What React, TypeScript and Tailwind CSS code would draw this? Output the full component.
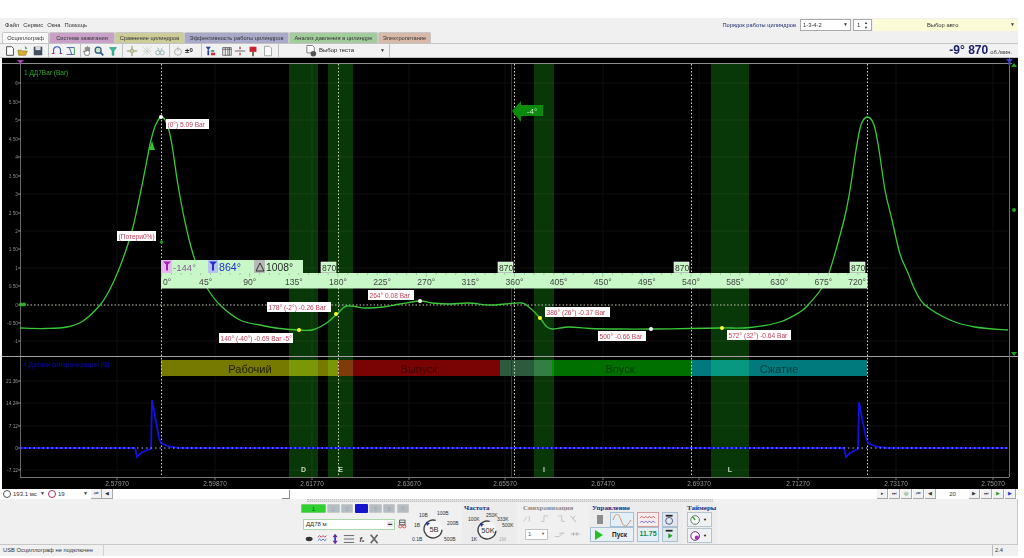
import React from "react";

const F = "font-['Liberation_Sans',Arial,sans-serif]";

function smooth(pts: number[][]) {
  let d = `M${pts[0][0]} ${pts[0][1]}`;
  for (let i = 0; i < pts.length - 1; i++) {
    const p0 = pts[Math.max(i - 1, 0)], p1 = pts[i], p2 = pts[i + 1], p3 = pts[Math.min(i + 2, pts.length - 1)];
    const c1x = p1[0] + (p2[0] - p0[0]) / 6, c1y = p1[1] + (p2[1] - p0[1]) / 6;
    const c2x = p2[0] - (p3[0] - p1[0]) / 6, c2y = p2[1] - (p3[1] - p1[1]) / 6;
    d += ` C${c1x.toFixed(1)} ${c1y.toFixed(1)} ${c2x.toFixed(1)} ${c2y.toFixed(1)} ${p2[0]} ${p2[1]}`;
  }
  return d;
}

const curve = [
  [20, 328], [45, 328.5], [67, 327], [83, 321], [100, 305], [109, 291], [117, 274], [125, 253], [133, 227], [140, 195], [146, 165], [151, 140], [156, 124], [161.5, 117],
  [167, 124], [172, 145], [178, 185], [185, 222], [193, 254], [200, 273], [207, 288], [220, 305], [240, 320], [260, 325], [280, 328.5], [300, 330], [312, 330], [325, 324], [337, 314], [343, 308], [347, 306],
  [355, 306.5], [365, 308], [383, 307], [400, 304], [420, 301], [432, 303], [450, 304], [468, 303], [490, 305], [505, 304], [522, 303], [530, 308], [540, 318], [546, 326], [552, 329],
  [569, 327], [590, 328.5], [620, 329], [651, 329], [690, 328.5], [722, 328], [750, 327.5], [780, 322], [800, 312], [808, 305], [822, 288], [829, 273], [844, 220], [850, 190], [856, 150], [861, 125], [867.5, 117],
  [874, 125], [879, 150], [885, 190], [892, 220], [900, 254], [908, 273], [915, 290], [925, 305], [950, 320], [975, 327], [1008, 330],
];
const yTicks = [["6", 83], ["5.50", 102], ["5", 120], ["4.50", 139], ["4", 157], ["3.50", 176], ["3", 194], ["2.50", 213], ["2", 231], ["1.50", 249], ["1", 268], ["0.50", 286], ["0", 305], ["-0.50", 323], ["-1", 341]] as [string, number][];
const y2Ticks = [["21.36", 381], ["14.24", 403], ["7.12", 426], ["0", 448], ["-7.12", 470]] as [string, number][];
const xLabels = [["2.57970", 117], ["2.59870", 215], ["2.61770", 312], ["2.63670", 409], ["2.65570", 505], ["2.67470", 603], ["2.69370", 699], ["2.71270", 798], ["2.73170", 896], ["2.75070", 993]] as [string, number][];
const zones = [[289, 29, "D"], [328, 25, "E"], [534, 20, "I"], [711, 38, "L"]] as [number, number, string][];
const phases = [[161, 177, "#777a00", "Рабочий", "#1c1c00", 250], [338, 162, "#7a0404", "Выпуск", "#3e0000", 419], [500, 52, "#2d5a3d", "", "", 0], [552, 139, "#007000", "Впуск", "#003c00", 620], [691, 176, "#007a7c", "Сжатие", "#003c40", 779]] as [number, number, string, string, string, number][];
const degs = [0, 45, 90, 135, 180, 225, 270, 315, 360, 405, 450, 495, 540, 585, 630, 675, 720];
const pts = [[161, 117, "#fff"], [299, 330, "#ffff30"], [336, 314, "#ffff30"], [420, 301, "#fff"], [540, 318, "#ffff30"], [651, 329, "#fff"], [722, 328, "#ffff30"]] as [number, number, string][];

function Tag({ x, y, t, w }: { x: number; y: number; t: string; w: number }) {
  return (
    <g>
      <rect x={x} y={y} width={w} height={10} fill="#fff" />
      <text x={x + 1.5} y={y + 7.6} fontSize="6.6" fill="#c2405a">{t}</text>
    </g>
  );
}

function Chart() {
  const xd = (d: number) => 161.5 + d * 0.98055;
  return (
    <svg width={1016} height={431} viewBox="2 58 1016 431" className="block" fontFamily="Liberation Sans, Arial, sans-serif">
      <rect x="2" y="58" width="1016" height="431" fill="#000" />
      {[83, 120, 157, 194, 231, 268, 341, 381, 403, 426, 470].map((y) => <line key={y} x1="20" x2="1008" y1={y} y2={y} stroke="#0e0e0e" />)}
      {xLabels.map(([, x]) => <line key={x} x1={x} x2={x} y1="63" y2="477" stroke="#0e0e0e" />)}

      {phases.map(([x, w, c]) => <rect key={x} x={x} y={360} width={w} height={16} fill={c} />)}
      {zones.map(([x, w]) => <rect key={x} x={x} y={63} width={w} height={414} fill="#083808" className="mix-blend-screen" />)}
      {phases.map(([, , , t, c, x]) => t && <text key={t} x={x} y={372.5} fontSize="11" textAnchor="middle" fill={c}>{t}</text>)}
      {zones.map(([x, w, l]) => <text key={l} x={x + w / 2} y={472} fontSize="7" fontWeight="700" textAnchor="middle" fill="#c8d8c8">{l}</text>)}

      <line x1="2" x2="1012" y1="63.5" y2="63.5" stroke="#8c8c8c" />
      <line x1="2" x2="1018" y1="356.5" y2="356.5" stroke="#a8a0a8" />
      <line x1="20.5" x2="20.5" y1="63" y2="356" stroke="#666" />
      <line x1="20.5" x2="20.5" y1="357" y2="477" stroke="#666" />
      <line x1="20" x2="1009" y1="477.5" y2="477.5" stroke="#777" />
      <line x1="1009.5" x2="1009.5" y1="58" y2="477" stroke="#6060d0" />
      {yTicks.map(([t, y]) => <g key={t}><text x="18" y={y + 2} fontSize="4.8" textAnchor="end" fill="#8a8a8a">{t}</text><line x1="18" x2="21" y1={y} y2={y} stroke="#888" /></g>)}
      {y2Ticks.map(([t, y]) => <g key={t}><text x="18" y={y + 2} fontSize="4.8" textAnchor="end" fill="#999">{t}</text><line x1="18" x2="21" y1={y} y2={y} stroke="#888" /></g>)}
      {xLabels.map(([t, x]) => <g key={t}><text x={x} y="486" fontSize="6.5" textAnchor="middle" fill="#999">{t}</text><line x1={x} x2={x} y1="477" y2="480" stroke="#777" /></g>)}

      {[161.5, 338.5, 691.5, 867.5, 514.5].map((x) => <line key={x} x1={x} x2={x} y1="64" y2="477" stroke="#d8d8c0" strokeDasharray="1.5 2" />)}
      <line x1="511.5" x2="511.5" y1="64" y2="477" stroke="#8a1414" />
      <line x1="20" x2="1008" y1="305" y2="305" stroke="#c8c8b8" strokeDasharray="1.5 2" />

      <path d="M17 60h7l-2.5 2.5v2h-2v-2z" fill="#b040c0" />
      <path d="M1006 59h7l-2.5 3v3h-2v-3z" fill="#4040d0" />
      <path d="M1011 67l3-4 3 4z" fill="#20a020" />
      <path d="M1011 352h6l-3 4z" fill="#20a020" />
      <circle cx="1014" cy="210" r="2" fill="#20a020" />

      <path d="M20 448 H135 L137 457 L141 453 L147 450 L151 449 L152 400 L155 416 L159 438 L161 443 L165 445 L172 447 L180 448 H844 L846 457 L850 453 L856 450 L858 449 L859 402 L862 418 L866 438 L868 443 L872 445 L879 447 L887 448 H1008" fill="none" stroke="#1010e0" strokeWidth="1.8" />
      <line x1="20" x2="1008" y1="448" y2="448" stroke="#b0b0ff" strokeDasharray="1.5 3" />
      <text x="23" y="367" fontSize="6.7" fill="#0a0ab0">4 Датчик синхронизации (В)</text>

      <path d={smooth(curve)} fill="none" stroke="#38c838" strokeWidth="1.3" />
      <path d="M149 150l3-9 3 9z" fill="#35c035" />
      <circle cx="161.5" cy="242" r="1.8" fill="#1f8f1f" />
      <circle cx="21" cy="304.5" r="2" fill="#2fb02f" /><circle cx="24" cy="304.5" r="2" fill="#2fb02f" />

      <rect x="161" y="260" width="142" height="13" fill="#c8f8c8" />
      <rect x="161" y="260" width="11" height="13" fill="#e8b8f0" />
      <rect x="208" y="260" width="10" height="13" fill="#b8c0f8" />
      <rect x="254" y="260" width="11" height="13" fill="#b8b8b8" />
      <path d="M163 261.5h8l-3 3v6h-2v-6z" fill="#a020b0" />
      <path d="M209 261.5h8l-3 3v6h-2v-6z" fill="#2030c0" />
      <path d="M256 271l4-8 4 8z" fill="none" stroke="#222" strokeWidth="0.9" />
      <text x="173" y="270.5" fontSize="9.6" fill="#8a5a98">-144°</text>
      <text x="219" y="270.5" fontSize="10.6" fill="#2030d0">864°</text>
      <text x="266" y="270.5" fontSize="10.3" fill="#2a2a2a">1008°</text>
      {[321, 498, 674, 850].map((x) => <g key={x}><rect x={x} y={262} width={15} height={10.5} fill="#c8f8c8" stroke="#f0f0f0" strokeWidth="0.6" /><text x={x + 1} y={270.5} fontSize="8.5" fill="#333">870</text></g>)}
      <rect x="161" y="273" width="706.5" height="15.5" fill="#c8f8c8" />
      {Array.from({ length: 73 }, (_, i) => <line key={i} x1={xd(i * 10)} x2={xd(i * 10)} y1="273" y2={i % 9 === 0 ? 277 : 275} stroke="#8aa88a" strokeWidth="0.6" />)}
      {degs.map((d) => <text key={d} x={d === 0 ? 163 : d === 720 ? 866 : xd(d)} y="284.5" fontSize="8.6" textAnchor={d === 0 ? "start" : d === 720 ? "end" : "middle"} fill="#444">{d}°</text>)}

      {pts.map(([x, y, c]) => <circle key={x} cx={x} cy={y} r="2" fill={c} />)}

      <path d="M512 111L521 101V105H543V116H521V122Z" fill="#0b8a0b" />
      <text x="532" y="113.5" fontSize="8" textAnchor="middle" fill="#c8e8c8">-4°</text>

      <text x="24" y="75" fontSize="6.5" fill="#2fa82f">1 ДД7Bar (Bar)</text>
      <Tag x={166} y={119} w={43} t="(0°) 5.09 Bar" />
      <Tag x={117} y={231} w={39} t="(Потери0%)" />
      <Tag x={267} y={302} w={64} t="178° (-2°) -0.26 Bar" />
      <Tag x={219} y={333} w={74} t="140° (-40°) -0.69 Bar -5°" />
      <Tag x={368} y={290} w={46} t="264° 0.08 Bar" />
      <Tag x={545} y={307} w={65} t="386° (26°) -0.37 Bar" />
      <Tag x={598} y={331} w={48} t="500° -0.66 Bar" />
      <Tag x={727} y={330} w={64} t="572° (32°) -0.64 Bar" />
    </svg>
  );
}

function Ico({ children, w = 14, cls = "" }: { children: React.ReactNode; w?: number; cls?: string }) {
  return <svg width={w} height={14} viewBox="0 0 14 14" className={`shrink-0 ${cls}`} fill="none">{children}</svg>;
}

function Toolbar() {
  return (
    <div className="h-[13px] flex items-center bg-[#f2f2f2] border-y border-[#c4c4c4] pl-[2px] pr-[2px] box-content">
      <Ico w={12} cls="ml-[2px]"><path d="M3 2h6l2 2v8H3z" stroke="#333" fill="#fff" /></Ico>
      <Ico w={12} cls="ml-[1px]"><path d="M1 6h4l1 1h6l-2 5H2z" fill="#d8b030" stroke="#806010" strokeWidth=".6" /><path d="M9 1l3 3-2 1z" fill="#20a020" /></Ico>
      <Ico w={12} cls="ml-[3px]"><path d="M2 2h10v10H2z" fill="#405060" /><path d="M4 2h6v4H4z" fill="#ddd" /></Ico>
      <div className="ml-[4px] w-px h-[13px] bg-[#c0c0c0]" />
      <Ico w={12} cls="ml-[2px]"><path d="M3 10V6a4 4 0 018 0v4" stroke="#3050c0" strokeWidth="1.2" /><path d="M1 10h3M10 10h3" stroke="#c03050" strokeWidth="1.2" /></Ico>
      <Ico w={12} cls="ml-[2px]"><path d="M2 3h9M2 11h9M5 3l3 8" stroke="#3050a0" /><path d="M11 3v8" stroke="#30a050" /></Ico>
      <div className="ml-[3px] w-px h-[13px] bg-[#c0c0c0]" />
      <Ico w={12}><path d="M5 12L3 7l2 1V3h1v4h1V2h1v5h1V3h1v6l-1 3z" stroke="#444" strokeWidth=".7" fill="#fff" /></Ico>
      <Ico w={12}><circle cx="6" cy="6" r="3.5" stroke="#2a5a8a" strokeWidth="1.4" fill="#cfe6c5" /><path d="M8.5 8.5L12 12" stroke="#2a5a8a" strokeWidth="2" /></Ico>
      <Ico w={12} cls="ml-[2px]"><path d="M3 3h8L8 7v5H6V7z" fill="#30c0a0" stroke="#108060" strokeWidth=".6" /></Ico>
      <div className="ml-[3px] w-px h-[13px] bg-[#c0c0c0]" />
      <Ico w={12} cls="ml-[3px]"><path d="M7 1v12M1 7h12" stroke="#7a8a50" /><circle cx="7" cy="7" r="2.2" fill="#d0d8a0" stroke="#7a8a50" strokeWidth=".6" /></Ico>
      <Ico w={12} cls="ml-[3px]"><path d="M2 2l4 4M12 2L8 6M2 12l4-4M12 12L8 8M2 7h10M7 2v10" stroke="#a0b0a0" strokeWidth=".8" strokeDasharray="1 .6" /></Ico>
      <Ico w={12} cls="ml-[1px]"><circle cx="4.5" cy="9" r="2.5" stroke="#8aa" /><circle cx="9.5" cy="9" r="2.5" stroke="#8aa" /><path d="M4 3l2 3M10 3L8 6" stroke="#8aa" /></Ico>
      <div className="ml-[3px] w-px h-[13px] bg-[#c0c0c0]" />
      <Ico w={12} cls="ml-[2px]"><circle cx="7" cy="8" r="4" stroke="#aaa" /><path d="M7 2v5" stroke="#aaa" /></Ico>
      <span className="ml-[1px] w-[12px] text-[8px] leading-none text-[#222] font-bold whitespace-nowrap">±<span className="text-[6px] align-top">0</span></span>
      <div className="ml-[4px] w-px h-[13px] bg-[#c0c0c0]" />
      <Ico w={12} cls="ml-[2px]"><path d="M2 2l3 4 3-4zM4 6h2v6H4z" fill="#2040a0" /><path d="M8 9h5v3H8z" fill="#d03040" /><path d="M8 6h4v2H8z" fill="#30a060" /></Ico>
      <Ico w={12} cls="ml-[5px]"><path d="M2 3h10v9H2zM2 5h10M5 3v9M8 3v9M10 3v9" stroke="#444" strokeWidth=".8" /></Ico>
      <Ico w={12} cls="ml-[1px]"><path d="M1 7h12" stroke="#555" /><path d="M7 2v3M7 9v3" stroke="#c04040" strokeWidth="1.6" /></Ico>
      <Ico w={12} cls="ml-[1px]"><path d="M3 2h8v6H3z" fill="#d02030" /><path d="M6 8h2v5H6z" fill="#606040" /></Ico>
      <Ico w={12} cls="ml-[3px]"><path d="M3 1.5h6l2 2v9H3z" stroke="#999" fill="#fff" /></Ico>
      <div className="ml-[4px] w-px h-[13px] bg-[#c0c0c0]" />
      <div className="ml-[26px] flex items-center w-[84px] justify-between pr-[2px]">
        <span className="flex items-center gap-[1px] text-[6px] text-[#222] whitespace-nowrap">
          <Ico w={13}><path d="M2 1h6l2 2v6H2z" stroke="#777" fill="#fff" /><circle cx="9" cy="10" r="3" fill="#555" /></Ico>Выбор теста
        </span>
        <span className="text-[5px] text-[#333] pr-[2px]">▼</span>
      </div>
      <div className="h-[13px] w-px bg-[#c0c0c0]" />
      <div className="ml-auto flex items-baseline pr-[4px]">
        <span className="text-[12px] leading-none font-bold text-[#1a2070] whitespace-nowrap">-9° 870</span>
        <span className="text-[5.8px] text-[#333] ml-[2px] whitespace-nowrap">об./мин.</span>
      </div>
    </div>
  );
}

const tabs = [["Осциллограф", "bg-[#fafafa]", "w-[47px]"], ["Система зажигания", "bg-[#c8a0c8]", "w-[66px]"], ["Сравнение цилиндров", "bg-[#cccc99]", "w-[69px]"], ["Эффективность работы цилиндров", "bg-[#a9a9c9]", "w-[105px]"], ["Анализ давления в цилиндре", "bg-[#a2cc9c]", "w-[89px]"], ["Электропитание", "bg-[#d8b8a8]", "w-[53px]"]];

function Menu() {
  return (
    <div className="h-[25px] bg-[#f0f0f0] flex flex-col">
      <div className="h-[14px] flex items-center">
        <div className="pl-[5px] flex gap-[4px] text-[5.8px] text-[#333] whitespace-nowrap pt-[1px]">
          <span>Файл</span><span>Сервис</span><span>Окна</span><span>Помощь</span>
        </div>
        <div className="ml-auto flex items-center h-[12px] whitespace-nowrap">
          <span className="text-[5.7px] text-[#1c2c70] mr-[4px]">Порядок работы цилиндров</span>
          <div className="w-[51px] h-[12px] bg-white border border-[#aaa] flex items-center justify-between px-[2px] text-[5.8px] text-[#333]"><span>1-3-4-2</span><span className="text-[5px]">▼</span></div>
          <div className="ml-[2px] w-[19px] h-[12px] bg-white border border-[#aaa] flex items-center justify-between px-[3px] text-[6px] text-[#333]"><span>1</span><span className="text-[4px] leading-[5px]">▲<br />▼</span></div>
          <div className="ml-[1px] w-[145px] h-[12px] bg-[#fbfbd8] flex items-center justify-between text-[5.8px] text-[#333] pr-[3px]"><span className="ml-[54px]">Выбор авто</span><span className="text-[5px]">▼</span></div>
        </div>
      </div>
      <div className="h-[11px] flex items-end pl-[2px]">
        {tabs.map(([t, c, w]) => (
          <div key={t} className={`${c} ${w} h-[11px] rounded-t-[2px] border border-b-0 border-[#c8c8c8] flex items-center justify-center text-[5.7px] text-[#333] whitespace-nowrap overflow-hidden`}>{t}</div>
        ))}
      </div>
    </div>
  );
}

function SmallBtn({ children, c = "#333" }: { children: string; c?: string }) {
  return <div className="w-[11px] h-[10px] bg-[#f2f2f2] border-b border-r border-[#a8a8a8] flex items-center justify-center text-[5px] leading-none" style={{ color: c }}>{children}</div>;
}

function Lbl({ t, x, y, c = "#333" }: { t: string; x: number; y: number; c?: string }) {
  return <span className="absolute text-[5px] leading-none whitespace-nowrap" style={{ left: x, top: y, color: c }}>{t}</span>;
}

function Dial({ value, cls }: { value: string; cls: string }) {
  return (
    <svg width={20} height={20} className={`absolute ${cls}`} viewBox="0 0 20 20">
      <circle cx="10" cy="10" r="9" fill="#f6f6f6" stroke="#444" strokeWidth="1.4" strokeDasharray="34 12" transform="rotate(70 10 10)" />
      <path d="M3 3l4 1-3 3z" fill="#2030a0" />
      <text x="11" y="13" fontSize="7.5" textAnchor="middle" fill="#333" fontFamily="Liberation Sans, Arial, sans-serif">{value}</text>
    </svg>
  );
}

const Title = ({ t, c = "text-[#1c2c80]" }: { t: string; c?: string }) => <div className={`text-[7px] font-bold ${c} leading-[8px] pl-[2px] pt-[1px] whitespace-nowrap font-['Liberation_Serif',serif]`}>{t}</div>;

function Controls() {
  const chans = ["1", "2", "3", "4", "5", "6", "7"];
  return (
    <div className="pl-[301px]">
      <div className="h-[3px] ml-[6px] w-[406px] bg-[#dde0e4] border-y border-dotted border-[#c0c0c0]" />
      <div className="flex h-[43px] pt-[1px]">
        <div className="w-[108px] shrink-0">
          <div className="flex gap-[1.3px] pt-[1px]">
            {chans.map((c, i) => (
              <div key={c} className={`h-[9px] flex items-center justify-center text-[6px] leading-none rounded-[1px] ${i === 0 ? "w-[26px] bg-[#30d030] text-[#063] border border-[#70d070]" : i === 3 ? "w-[14px] bg-[#1414c8] text-[#1414c8]" : "w-[13px] bg-[#b4bcc4] text-[#a0a4a8] border border-[#c8c8c8]"}`}>{c}</div>
            ))}
          </div>
          <div className="mt-[4px] flex items-center gap-[3px] ml-[2px]">
            <div className="w-[92px] h-[11px] bg-white border border-[#a8d8a8] text-[6px] text-[#333] pl-[2px] flex items-center justify-between pr-[1px] whitespace-nowrap"><span>ДД78 м</span><span className="text-[4px] bg-[#e8e8e8] px-[1px]">▬</span></div>
            <Ico w={11}><path d="M2 2h7v6H2z" stroke="#344" /><path d="M2 5h7" stroke="#344" /><circle cx="3" cy="10" r="2" stroke="#d03030" /><circle cx="8" cy="10" r="2" stroke="#d03030" /></Ico>
          </div>
          <div className="mt-[1px] flex items-center gap-[1px] pl-[3px]">
            <Ico w={12}><ellipse cx="6" cy="7" rx="4" ry="2.5" fill="#333" /></Ico>
            <Ico w={12}><path d="M1 5l2-2 2 2 2-2 2 2 2-2" stroke="#b03060" /><path d="M1 9l2-2 2 2 2-2 2 2 2-2" stroke="#3060b0" /></Ico>
            <Ico w={12}><path d="M6 1l3 4H3zM6 13l3-4H3z" fill="#7020a0" /><path d="M5 5h2v4H5z" fill="#2030c0" /></Ico>
            <Ico w={12}><path d="M1 3h12M1 7h12M1 11h12" stroke="#555" /></Ico>
            <span className="w-[12px] text-center italic font-bold text-[7px] leading-none text-[#333]">fₓ</span>
            <Ico w={12}><path d="M2 2l8 10M10 2L2 12" stroke="#666" strokeWidth="2" /></Ico>
          </div>
        </div>
        <div className="w-[53px] relative shrink-0">
          <Lbl t="10В" x={10} y={10} /><Lbl t="100В" x={28} y={8} /><Lbl t="200В" x={38} y={18} /><Lbl t="1В" x={5} y={20} /><Lbl t="500В" x={35} y={34} /><Lbl t="0.1В" x={3} y={34} />
          <Dial value="5В" cls="left-[14px] top-[16px]" />
        </div>
        <div className="w-[55px] relative shrink-0 bg-[#ececec] rounded-[2px] mb-[1px]">
          <Title t="Частота" />
          <Lbl t="250K" x={24} y={9.5} /><Lbl t="100K" x={6} y={13.5} /><Lbl t="333K" x={35} y={13.5} /><Lbl t="500K" x={40} y={19.5} /><Lbl t="1K" x={9} y={34} /><Lbl t="1M" x={37} y={34} c="#aaa" />
          <Dial value="50K" cls="left-[15px] top-[17px]" />
        </div>
        <div className="w-[66px] ml-[4px] shrink-0">
          <Title t="Синхронизация" c="text-[#8a8a8a]" />
          <div className="flex pl-[2px] h-[14px] items-center">
            <Ico w={11}><path d="M1 10l4-6M8 3v7" stroke="#bbb" /></Ico>
            <Ico w={11} cls="ml-[6px]"><path d="M1 10h4V3h5" stroke="#bbb" /></Ico>
            <Ico w={11} cls="ml-[6px]"><path d="M1 3h5v7h4" stroke="#bbb" /></Ico>
            <Ico w={11} cls="ml-[1px]"><path d="M2 3l7 8M8 3l-3 3" stroke="#aaa" /></Ico>
          </div>
          <div className="flex items-center mt-[1px] ml-[4px]">
            <div className="w-[23px] h-[11px] bg-white border border-[#c4c4c4] flex items-center justify-between px-[2px] text-[6px] text-[#555]"><span>1</span><span className="text-[4px]">▼</span></div>
            <Ico w={12} cls="ml-[6px]"><path d="M1 10h5l5-5M6 6h6" stroke="#bbb" /></Ico>
            <Ico w={12} cls="ml-[4px]"><path d="M1 7h10M4 5v4M8 5v4" stroke="#aaa" /></Ico>
          </div>
        </div>
        <div className="w-[94px] ml-[2px] shrink-0 bg-[#ececec] rounded-[2px] mb-[1px] pl-[1px]">
          <Title t="Управление" />
          <div className="flex h-[15px] mt-[0px]">
            <div className="w-[20px] flex items-center justify-center"><div className="w-[6px] h-[9px] bg-[#8c8c8c]" /></div>
            <div className="w-[24px] bg-[#e4eef6] border border-[#a8c0d4] flex items-center justify-center">
              <svg width="20" height="12" viewBox="0 0 20 12" fill="none"><path d="M1 6c3-8 5-8 8 0s5 8 10 0" stroke="#d09060" /></svg>
            </div>
            <div className="w-[22px] ml-[3px] bg-[#f6ecec] border border-[#d0a0a0] flex items-center justify-center">
              <svg width="19" height="10" viewBox="0 0 20 10" fill="none"><path d="M1 3l2-2 2 2 2-2 2 2 2-2 2 2 2-2 2 2" stroke="#b03030" strokeWidth=".7" /><path d="M1 8l2-2 2 2 2-2 2 2 2-2 2 2 2-2 2 2" stroke="#3030c0" strokeWidth=".7" /></svg>
            </div>
            <div className="w-[16px] ml-[3px] bg-[#e0e8ee] border border-[#a8c0d4] flex items-center justify-center">
              <Ico w={12}><circle cx="6" cy="8" r="4" stroke="#447" /><path d="M2 2h8" stroke="#222" strokeWidth="2" /></Ico>
            </div>
          </div>
          <div className="flex h-[15px]">
            <div className="w-[44px] bg-[#e8f0f6] border border-[#a8c0d4] flex items-center">
              <svg width="10" height="12" viewBox="0 0 10 12" className="ml-[3px]"><path d="M1 1l8 5-8 5z" fill="#20c020" /></svg>
              <span className="ml-[8px] text-[6.5px] font-bold text-[#222]">Пуск</span>
            </div>
            <div className="w-[22px] ml-[3px] bg-[#e4eef6] border border-[#a8c0d4] flex items-center justify-center text-[7px] font-bold text-[#1a8a3a]">11.75</div>
            <div className="w-[16px] ml-[3px] bg-[#e0e8ee] border border-[#a8c0d4] flex items-center justify-center">
              <Ico w={12}><path d="M5 5l5 3-5 3z" fill="#20a020" /><path d="M2 2h8" stroke="#222" strokeWidth="2" /></Ico>
            </div>
          </div>
        </div>
        <div className="w-[32px] ml-[2px] shrink-0 bg-[#ececec] rounded-[2px] mb-[1px]">
          <Title t="Таймеры" />
          <div className="w-[25px] h-[15px] ml-[2px] bg-[#eef2f4] border border-[#b8c4cc] flex items-center pl-[2px] gap-[1px]">
            <Ico w={12}><circle cx="6" cy="7" r="5" stroke="#406050" fill="#fff" /><path d="M3 3l3 4" stroke="#20a020" strokeWidth="1.5" /></Ico><span className="text-[4px]">▼</span>
          </div>
          <div className="w-[25px] h-[15px] ml-[2px] mt-[1px] bg-[#eef2f4] border border-[#b8c4cc] flex items-center pl-[2px] gap-[1px]">
            <Ico w={12}><circle cx="6" cy="7" r="5" stroke="#506" fill="#fff" /><circle cx="8" cy="9" r="2.5" fill="#a030b0" /></Ico><span className="text-[4px]">▼</span>
          </div>
        </div>
      </div>
    </div>
  );
}

export default function App() {
  return (
    <div className={`${F} w-[1024px] h-[558px] bg-white overflow-hidden flex flex-col`}>
      <div className="h-[18px] shrink-0" />
      <div className="w-[1018px] flex flex-col">
        <Menu />
        <Toolbar />
        <div className="pl-[2px] h-[431px]"><Chart /></div>
        <div className="h-[10px] flex items-center justify-between pl-[3px] pr-[2px] bg-white">
          <div className="flex items-center text-[6px] text-[#333] whitespace-nowrap">
            <span className="w-[8px] h-[8px] rounded-full border border-[#555] mr-[2px]" />
            <span className="w-[27px]">193.1 мс</span><span className="text-[5px] w-[8px]">▼</span>
            <span className="w-[8px] h-[8px] rounded-full border border-[#a03060] mr-[2px]" />
            <span className="w-[25px]">19</span><span className="text-[5px] w-[8px]">▼</span>
            <SmallBtn>⏮</SmallBtn><SmallBtn>◀</SmallBtn>
          </div>
          <div className="flex items-center gap-[1px] text-[6px] text-[#333]">
            <SmallBtn>▸</SmallBtn><SmallBtn>⏭</SmallBtn><SmallBtn c="#208020">◎</SmallBtn><SmallBtn>⏮</SmallBtn><SmallBtn>◀</SmallBtn>
            <span className="w-[31px] text-center">20</span>
            <SmallBtn>▶</SmallBtn><SmallBtn>⏭</SmallBtn><SmallBtn c="#20a020">▶</SmallBtn><SmallBtn c="#2030d0">▶</SmallBtn>
          </div>
        </div>
        <div className="h-[46px] bg-[#f0f0f0] border-b border-r border-[#c8c8c8] relative">
          <Controls />
          <div className="absolute left-[282px] top-[-9px] w-[8px] h-[9px] border-r border-b border-[#888]" />
        </div>
        <div className="h-[11px] bg-[#f0f0f0] flex items-center text-[5.8px] text-[#333] whitespace-nowrap">
          <div className="w-[104px] pl-[3px] border-r border-[#d0d0d0] h-full flex items-center">USB Осциллограф не подключен</div>
          <div className="ml-auto w-[26px] border-l border-[#bbb] h-full flex items-center pl-[2px]">2.4</div>
        </div>
      </div>
    </div>
  );
}
